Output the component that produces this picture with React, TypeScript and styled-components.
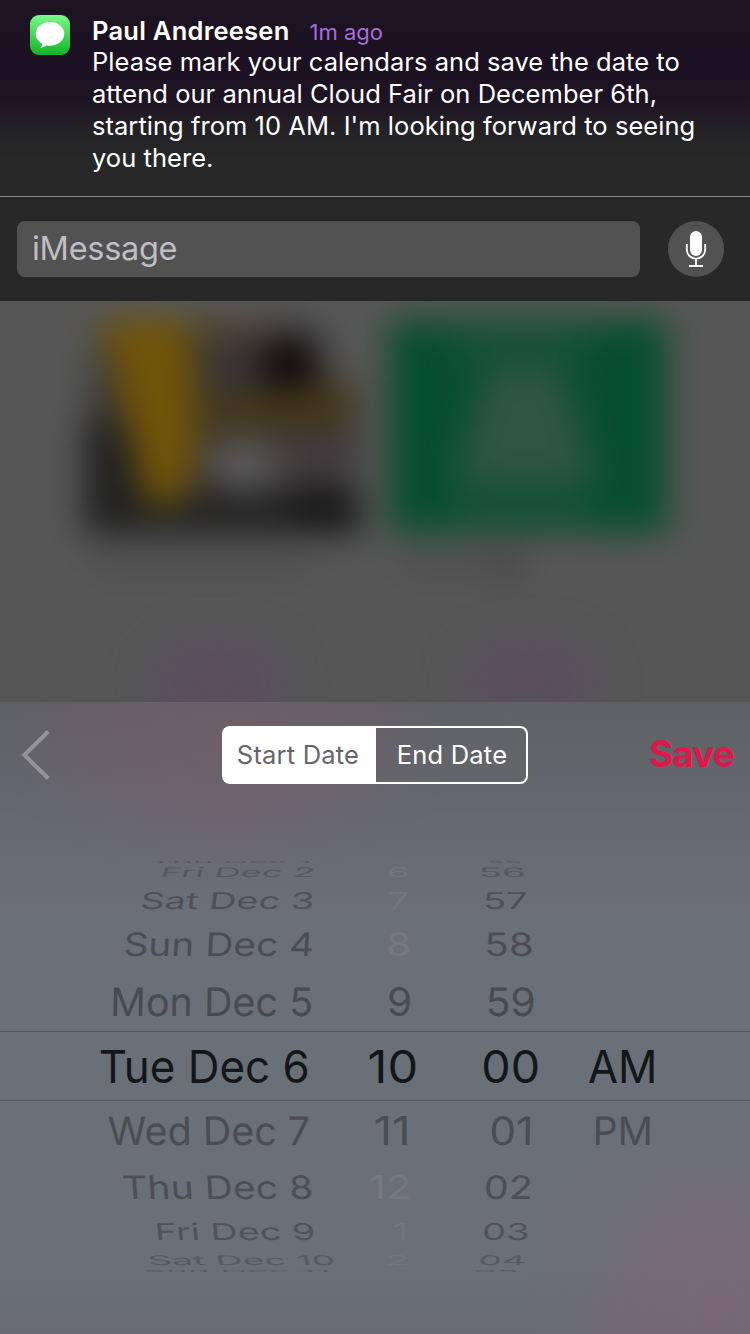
import React from "react";
import styled, { createGlobalStyle } from "styled-components";

const GlobalStyle = createGlobalStyle`
  *, *::before, *::after { box-sizing: border-box; }
  body {
    margin: 0;
    background: #565656;
    font-family: Inter, "Liberation Sans", sans-serif;
  }
`;

const Screen = styled.main`
  display: flex;
  flex-direction: column;
  width: 750px;
  height: 1334px;
  overflow: hidden;
  background: #565656;
`;

/* ---------- Notification ---------- */

const Notification = styled.section`
  display: flex;
  flex-direction: column;
  height: 301px;
  background: linear-gradient(
    #1d1423 0,
    #1c1122 60px,
    #1e1424 100px,
    #242226 130px,
    #282828 160px,
    #282828 100%
  );
`;

const Message = styled.div`
  display: flex;
  gap: 22px;
  height: 197px;
  padding: 15px 30px 0 30px;
  border-bottom: 1px solid #8b8b8b;
`;

const MessageContent = styled.div`
  flex: 1;
  color: #fff;
`;

const MessageHeader = styled.div`
  display: flex;
  align-items: baseline;
  gap: 20px;
  height: 31px;
  line-height: 32px;
`;

const Sender = styled.span`
  font-size: 25.5px;
  font-weight: 600;
  letter-spacing: 0.25px;
`;

const Age = styled.span`
  font-size: 22px;
  color: #a96cdc;
`;

const Body = styled.p`
  margin: 0;
  font-size: 25.5px;
  line-height: 32px;
  letter-spacing: 0.04px;
  white-space: nowrap;
`;

const ReplyBar = styled.div`
  display: flex;
  align-items: center;
  gap: 28px;
  flex: 1;
  padding: 0 26px 0 17px;
`;

const ReplyField = styled.div`
  display: flex;
  align-items: center;
  flex: 1;
  height: 56px;
  padding: 0 0 2px 15px;
  border-radius: 8px;
  background: #525252;
  color: #bebec3;
  font-size: 32.5px;
  letter-spacing: -0.3px;
`;

const MicButton = styled.button`
  display: grid;
  place-items: center;
  width: 56px;
  height: 56px;
  padding: 0;
  border: 0;
  border-radius: 50%;
  background: #525252;
`;

/* ---------- Blurred content behind ---------- */

const Backdrop = styled.section`
  height: 401px;
  overflow: hidden;

  svg { display: block; }
`;

/* ---------- Date sheet ---------- */

const Sheet = styled.section`
  display: flex;
  flex-direction: column;
  height: 632px;
  background:
    radial-gradient(ellipse 230px 160px at 225px 40px, rgba(132, 90, 104, 0.42), rgba(132, 90, 104, 0.2) 50%, rgba(132, 90, 104, 0) 100%),
    radial-gradient(ellipse 190px 190px at 715px 600px, rgba(140, 95, 115, 0.48), rgba(140, 95, 115, 0.2) 55%, rgba(140, 95, 115, 0) 100%),
    linear-gradient(#5f6165 0, #62656a 70px, #676b73 140px, #6a7078 220px, #6a7078 480px, #687078 560px, #676c74 100%);
`;

const Toolbar = styled.header`
  display: grid;
  grid-template-columns: 222px 306px 1fr;
  align-items: center;
  height: 106px;
`;

const BackButton = styled.button`
  display: flex;
  padding: 0 0 1px 20px;
  border: 0;
  background: none;
`;

const Segments = styled.div`
  display: flex;
  height: 58px;
`;

const Segment = styled.button<{ $active?: boolean }>`
  width: ${(p) => (p.$active ? 154 : 152)}px;
  padding: ${(p) => (p.$active ? "0 4px 1px 0" : "0 0 1px 2px")};
  border: 2px solid #fff;
  border-width: ${(p) => (p.$active ? "2px 0 2px 2px" : "2px 2px 2px 0")};
  border-radius: ${(p) => (p.$active ? "8px 0 0 8px" : "0 8px 8px 0")};
  background: ${(p) => (p.$active ? "#fff" : "transparent")};
  color: ${(p) => (p.$active ? "#67646a" : "#fff")};
  font: 400 25.5px Inter, "Liberation Sans", sans-serif;
  letter-spacing: 0.2px;
  white-space: nowrap;
`;

const SaveButton = styled.button`
  justify-self: end;
  padding: 0 16px 4px 0;
  border: 0;
  background: none;
  color: #e0174a;
  font: 700 37px Inter, "Liberation Sans", sans-serif;
  letter-spacing: -0.9px;
`;

const Wheel = styled.div`
  display: flex;
  flex-direction: column;
  margin-top: 52px;
`;

const WheelRow = styled.div<{
  $height: number;
  $overlap: number;
  $ink: string;
  $selected: boolean;
}>`
  display: grid;
  grid-template-columns: 340px 80px 125px 205px;
  flex: none;
  height: ${(p) => p.$height}px;
  margin-top: ${(p) => p.$overlap}px;
  padding-top: ${(p) => (p.$selected ? 2 : 0)}px;
  border: 0 solid #53585e;
  border-width: ${(p) => (p.$selected ? "1px 0" : "0")};
  color: ${(p) => p.$ink};
`;

const WheelCell = styled.div<{ $inset: number; $faded?: string }>`
  display: flex;
  align-items: center;
  justify-content: flex-end;
  min-height: 0;
  padding-right: ${(p) => p.$inset}px;
  color: ${(p) => p.$faded ?? "inherit"};
`;

const WheelLabel = styled.span`
  display: block;
  font-size: 45.5px;
  line-height: 0;
  white-space: pre;
  transform-origin: right center;
`;

/* Each entry is [text, left edge, right edge] on the drum's face. */
type Label = [string, number, number];

interface DrumRow {
  height: number;
  overlap?: number;
  stretch: number;
  lean: number;
  ink: string;
  selected?: boolean;
  /* Colour of an hour that cannot be picked. */
  hourInk?: string;
  labels: Label[];
}

const columnEnds = [340, 420, 545, 750];
const columnLean = [1, 0, -0.4, -0.6];

const drum: DrumRow[] = [
  { height: 3, stretch: 0.045, lean: 0, ink: "#575a61", hourInk: "#6b6f77",
    labels: [["Thu Dec 1", 152, 310], ["5", 388, 408], ["55", 488, 520]] },
  { height: 24, overlap: -3, stretch: 0.29, lean: -15, ink: "#565960", hourInk: "#71757d",
    labels: [["Fri Dec 2", 163, 313], ["6", 388, 408], ["56", 480.5, 523.5]] },
  { height: 33, stretch: 0.51, lean: -7, ink: "#4e5258", hourInk: "#72777f",
    labels: [["Sat Dec 3", 142, 312.5], ["7", 390, 408], ["57", 485.5, 526.5]] },
  { height: 56, stretch: 0.71, lean: -3.5, ink: "#4a4e54", hourInk: "#747980",
    labels: [["Sun Dec 4", 125, 312], ["8", 388.5, 409.5], ["58", 486.5, 531.5]] },
  { height: 58, stretch: 0.86, lean: -1, ink: "#484c51",
    labels: [["Mon Dec 5", 112.5, 310.5], ["9", 388.5, 410], ["59", 488, 533.5]] },
  { height: 70, stretch: 1, lean: 0, ink: "#14171a", selected: true,
    labels: [["Tue Dec 6", 100.5, 307.5], ["10", 370, 415.5], ["00", 483.5, 537.5], ["AM", 589, 654.5]] },
  { height: 59, stretch: 0.86, lean: 1, ink: "#4a4d54",
    labels: [["Wed Dec 7", 108.5, 308.5], ["11", 376, 407.5], ["01", 491, 530], ["PM", 595.5, 650.5]] },
  { height: 56, stretch: 0.71, lean: 3.5, ink: "#4c4f55", hourInk: "#747980",
    labels: [["Thu Dec 8", 124, 311.5], ["12", 370.5, 409.5], ["02", 485.5, 530.5]] },
  { height: 32, stretch: 0.51, lean: 6, ink: "#50545a", hourInk: "#72777f",
    labels: [["Fri Dec 9", 157, 313.5], ["1", 394, 406], ["03", 483.5, 527.5]] },
  { height: 24, stretch: 0.29, lean: 12, ink: "#575b61", hourInk: "#70767e",
    labels: [["Sat Dec 10", 149, 332.5], ["2", 388, 408], ["04", 480, 524]] },
  { height: 3, overlap: -3, stretch: 0.045, lean: 0, ink: "#585c62", hourInk: "#666b73",
    labels: [["Sun Dec 11", 144, 328], ["3", 396, 408], ["05", 475, 516]] },
];

const pen = document.createElement("canvas").getContext("2d")!;

/* Ink width of a label and the blank space after its last glyph. */
function measure(text: string) {
  pen.font = "45.5px Inter";
  const m = pen.measureText(text);
  return {
    ink: m.actualBoundingBoxLeft + m.actualBoundingBoxRight,
    trailing: m.width - m.actualBoundingBoxRight,
  };
}

function DrumLabel({ text, width, stretch, lean }: { text: string; width: number; stretch: number; lean: number }) {
  const { ink, trailing } = measure(text);
  const sx = width / ink;
  return (
    <WheelLabel
      style={{ transform: `translateX(${trailing * sx}px) skewX(${lean}deg) scale(${sx}, ${stretch})` }}
    >
      {text}
    </WheelLabel>
  );
}

function DateWheel() {
  return (
    <Wheel>
      {drum.map((row, i) => (
        <WheelRow
          key={i}
          $height={row.height}
          $overlap={row.overlap ?? 0}
          $ink={row.ink}
          $selected={!!row.selected}
        >
          {row.labels.map(([text, left, right], col) => (
            <WheelCell key={col} $inset={columnEnds[col] - right} $faded={col === 1 ? row.hourInk : undefined}>
              <DrumLabel text={text} width={right - left} stretch={row.stretch} lean={row.lean * columnLean[col]} />
            </WheelCell>
          ))}
        </WheelRow>
      ))}
    </Wheel>
  );
}

/* ---------- Drawings ---------- */

function MessagesIcon() {
  return (
    <svg width="40" height="40" viewBox="0 0 40 40">
      <defs>
        <linearGradient id="messages" x1="0" y1="0" x2="0" y2="1">
          <stop offset="0" stopColor="#7cf788" />
          <stop offset="1" stopColor="#0fb527" />
        </linearGradient>
      </defs>
      <rect width="40" height="40" rx="9" fill="url(#messages)" />
      <ellipse cx="20" cy="18.8" rx="14.3" ry="11.9" fill="#fff" />
      <path d="M12.5 26.5c.4 2.6-.4 4.600-2 5.900 2.500.3 5-.9 6.700-3z" fill="#fff" />
    </svg>
  );
}

function MicIcon() {
  return (
    <svg width="22" height="38" viewBox="0 0 22 38" fill="none" stroke="#fff">
      <rect x="5" y="1" width="12" height="25" rx="6" fill="#fff" stroke="none" />
      <path d="M1.8 14v5.500a9.200 9.200 0 0 0 18.400 0V14M11 28.700V36" strokeWidth="1.8" />
      <path d="M4 36h14" strokeWidth="2" />
    </svg>
  );
}

function BackIcon() {
  return (
    <svg width="32" height="54" viewBox="0 0 32 54" fill="none">
      <path d="M28.3 3.5 4.300 27l24 23.500" stroke="#949397" strokeWidth="4" strokeLinecap="butt" />
    </svg>
  );
}

function BlurredCards() {
  return (
    <svg width="750" height="401" viewBox="0 301 750 401">
      <defs>
        <filter id="soft" filterUnits="userSpaceOnUse" x="-60" y="200" width="870" height="600" colorInterpolationFilters="sRGB">
          <feGaussianBlur stdDeviation="17" />
        </filter>
        <filter id="wide" filterUnits="userSpaceOnUse" x="0" y="240" width="750" height="600" colorInterpolationFilters="sRGB">
          <feGaussianBlur stdDeviation="24" />
        </filter>
      </defs>
      <g filter="url(#soft)">
        <rect x="-60" y="200" width="870" height="600" fill="#565656" />
        <path d="M100 326h215l18 66 20 10v130H90V400z" fill="#383533" />
        <path d="M84 420h42l18 76h216v38H84z" fill="#212121" />
        <path d="M100 318h92l8 116-16 70h-38z" fill="#705409" />
        <path d="M185 318h75v18h-75z" fill="#544930" />
        <circle cx="290" cy="366" r="30" fill="#100c0e" />
        <path d="M210 398l146-18v44l-146 10z" fill="#45361a" />
        <ellipse cx="243" cy="464" rx="36" ry="26" fill="#5b5a5b" />
        <path d="M275 440h85v40h-85z" fill="#423e40" />
        <ellipse cx="325" cy="508" rx="38" ry="20" fill="#161616" />
        <rect x="390" y="320" width="277" height="212" fill="#064f2c" />
        <path d="M488 365h74l36 120H452z" fill="#305541" />
        <path d="M450 330h140v26H450zM450 500h140v22H450z" fill="#1b5237" />
        <path d="M95 550h210v20H95zM400 550h120v20H400z" fill="#4d4d4d" />
        <circle cx="508" cy="566" r="15" fill="#454545" />
      </g>
      <g filter="url(#wide)">
        <ellipse cx="217" cy="682" rx="60" ry="34" fill="#5a4e61" />
        <ellipse cx="530" cy="682" rx="60" ry="34" fill="#5a4e61" />
      </g>
    </svg>
  );
}

export default function App() {
  return (
    <>
      <GlobalStyle />
      <Screen>
        <Notification>
          <Message>
            <MessagesIcon />
            <MessageContent>
              <MessageHeader>
                <Sender>Paul Andreesen</Sender>
                <Age>1m ago</Age>
              </MessageHeader>
              <Body>
                Please mark your calendars and save the date to
                <br />
                attend our annual Cloud Fair on December 6th,
                <br />
                starting from 10 AM. I'm looking forward to seeing
                <br />
                you there.
              </Body>
            </MessageContent>
          </Message>
          <ReplyBar>
            <ReplyField>iMessage</ReplyField>
            <MicButton aria-label="Dictate">
              <MicIcon />
            </MicButton>
          </ReplyBar>
        </Notification>
        <Backdrop>
          <BlurredCards />
        </Backdrop>
        <Sheet>
          <Toolbar>
            <BackButton aria-label="Back">
              <BackIcon />
            </BackButton>
            <Segments>
              <Segment $active>Start Date</Segment>
              <Segment>End Date</Segment>
            </Segments>
            <SaveButton>Save</SaveButton>
          </Toolbar>
          <DateWheel />
        </Sheet>
      </Screen>
    </>
  );
}
